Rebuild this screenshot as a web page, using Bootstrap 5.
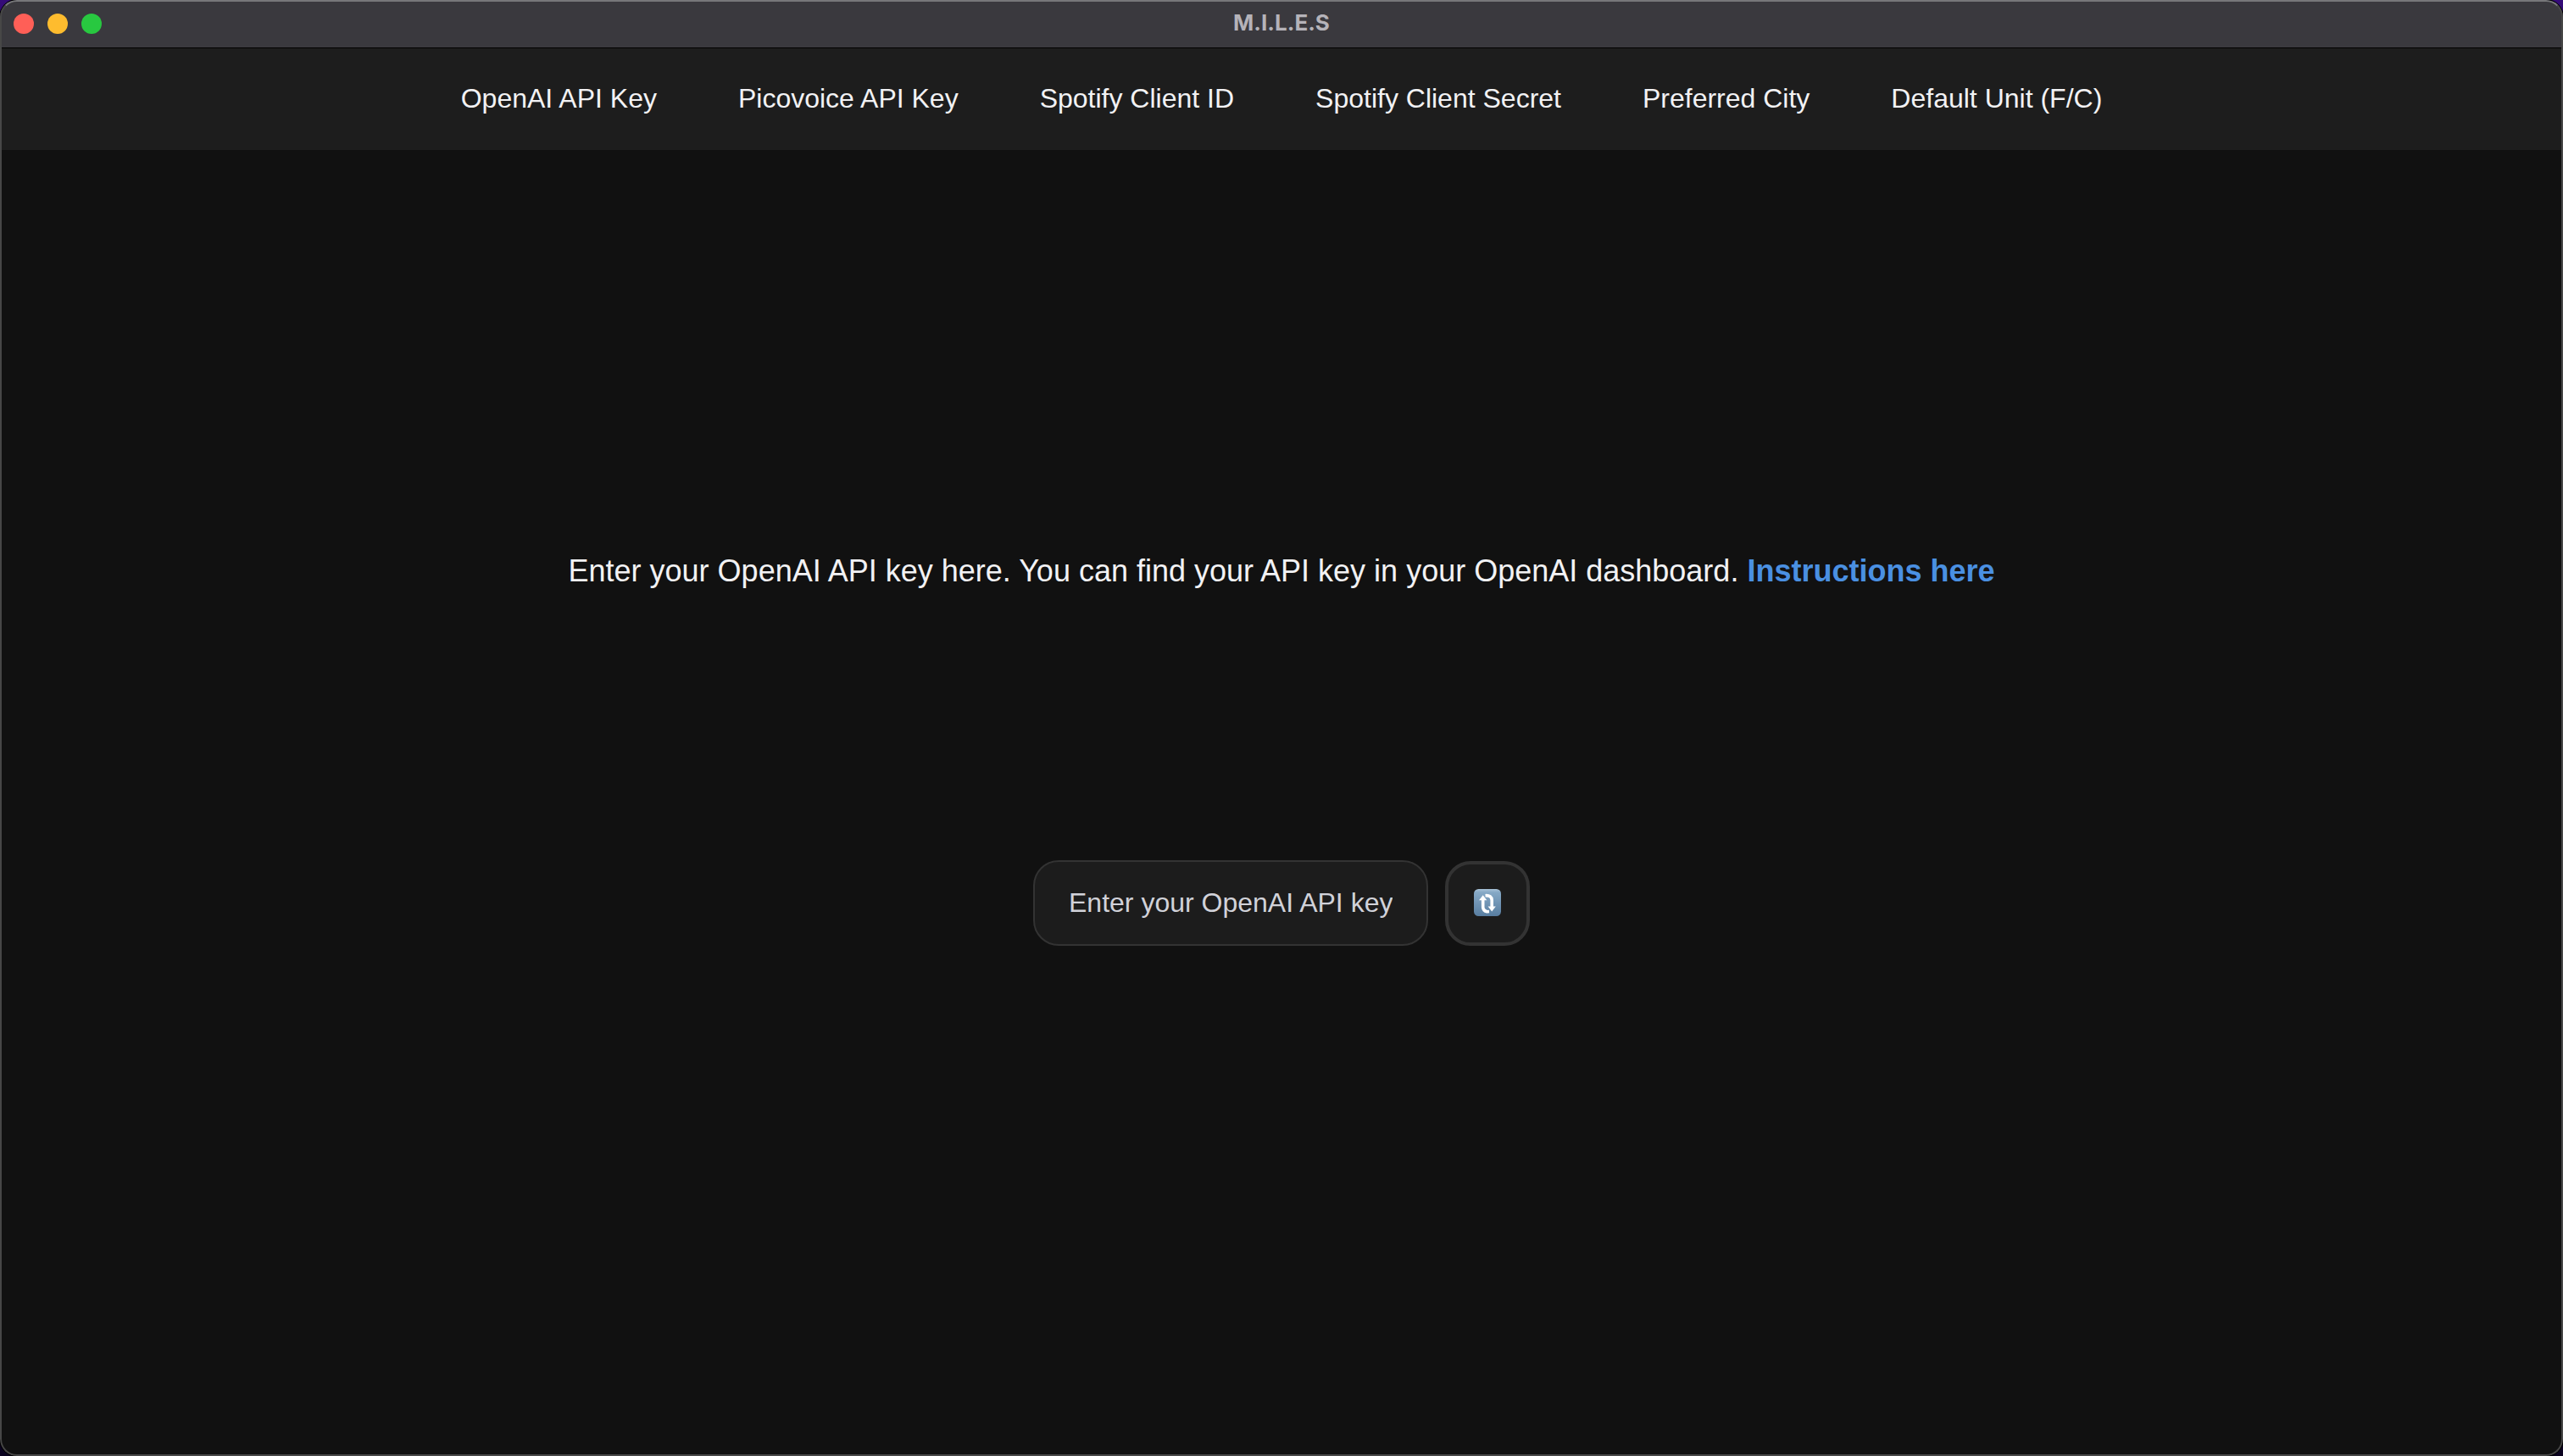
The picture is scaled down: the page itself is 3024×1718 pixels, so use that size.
<!DOCTYPE html>
<html lang="en" data-bs-theme="dark">
<head>
<meta charset="utf-8">
<meta name="viewport" content="width=device-width, initial-scale=1">
<title>M.I.L.E.S</title>
<link href="https://cdn.jsdelivr.net/npm/bootstrap@5.3.0/dist/css/bootstrap.min.css" rel="stylesheet">
<style>
  html, body { height: 100%; }
  body { background: #0b0320; font-family: "Liberation Sans", Arial, sans-serif; }
  .desktop { height: 100vh; background: linear-gradient(#350b78, #0b0320 30%, #0b0320); }
  .app-window { background: #111; border-radius: 20px; box-shadow: 0 0 0 1px #000; }
  /* light rim drawn over the window edge */
  .app-window::after {
    content: ""; position: absolute; inset: 0; pointer-events: none;
    border: 2px solid #474747; border-top-color: #77777a; border-radius: 20px;
  }
  .titlebar { height: 57px; background: #3a393e; border-bottom: 1px solid #000; padding: 0 16px; }
  .light { width: 24px; height: 24px; }
  .light-close { background: #ff5f57; }
  .light-min { background: #febc2e; }
  .light-max { background: #28c840; }
  .window-title { font-family: Inter, sans-serif; font-weight: 700; font-size: 26px; line-height: 52px; padding-bottom: 3px; color: #b5b3b9; }
  .side { flex: 1 1 0; }
  .topnav { height: 120px; background: #1d1d1d; gap: 96px; padding-bottom: 2px; }
  .topnav .nav-link { color: #f2f2f4; font-size: 32px; line-height: 40px; padding: 0; white-space: nowrap; }
  .hint { font-size: 36px; line-height: 42px; color: #f2f2f4; margin: 0; white-space: nowrap; padding-top: 476px; }
  .hint a { color: #4a90e2; font-weight: 700; text-decoration: none; }
  .key-form { gap: 20px; margin-top: 320px; }
  .key-input {
    width: 466px; height: 101px; padding: 0 40px; font-size: 32px; text-align: center;
    background: #1c1c1c; border: 2px solid #333; border-radius: 30px; color: #f2f2f4;
  }
  .key-input::placeholder { color: #d1d2d9; opacity: 1; }
  .swap-btn { width: 100px; height: 100px; padding: 0 0 2px; background: #1c1c1c; border: 4px solid #333; border-radius: 30px; margin-top: 1px; }
</style>
<script src="https://cdn.jsdelivr.net/npm/bootstrap@5.3.0/dist/js/bootstrap.bundle.min.js"></script>
</head>
<body class="overflow-hidden">
<div class="desktop">
  <div class="app-window position-relative d-flex flex-column h-100 overflow-hidden">
    <header class="titlebar d-flex align-items-center flex-shrink-0">
      <div class="side d-flex gap-3">
        <span class="light light-close rounded-circle"></span>
        <span class="light light-min rounded-circle"></span>
        <span class="light light-max rounded-circle"></span>
      </div>
      <div class="window-title">M.I.L.E.S</div>
      <div class="side"></div>
    </header>
    <nav class="topnav nav d-flex justify-content-center align-items-center flex-nowrap flex-shrink-0">
      <a class="nav-link" href="#">OpenAI API Key</a>
      <a class="nav-link" href="#">Picovoice API Key</a>
      <a class="nav-link" href="#">Spotify Client ID</a>
      <a class="nav-link" href="#">Spotify Client Secret</a>
      <a class="nav-link" href="#">Preferred City</a>
      <a class="nav-link" href="#">Default Unit (F/C)</a>
    </nav>
    <main class="flex-grow-1 d-flex flex-column align-items-center">
      <p class="hint">Enter your OpenAI API key here. You can find your API key in your OpenAI dashboard. <a href="#">Instructions here</a></p>
      <form class="key-form d-flex align-items-start">
        <input class="key-input form-control" type="text" placeholder="Enter your OpenAI API key">
        <button class="swap-btn btn d-flex align-items-center justify-content-center" type="button" aria-label="Update">
          <svg width="32" height="32" viewBox="0 0 32 32">
            <defs>
              <linearGradient id="tile" x1="0" y1="0" x2="0" y2="1">
                <stop offset="0" stop-color="#a9c3d8"/><stop offset=".12" stop-color="#86a9c6"/><stop offset="1" stop-color="#587da0"/>
              </linearGradient>
            </defs>
            <rect width="32" height="32" rx="5.5" fill="url(#tile)"/>
            <path d="M10.700 13v8.500q.3 4.300 4.800 5.200l2.500-.2" fill="none" stroke="#fff" stroke-width="3.600"/>
            <path d="M6 13.200 10.700 7.300l4.600 5.900z" fill="#fff"/>
            <path d="M13.500 7.700q7.500-.5 7.700 5.500v8" fill="none" stroke="#fff" stroke-width="3.600"/>
            <path d="M16.600 20.500h9.200l-4.600 5.900z" fill="#fff"/>
          </svg>
        </button>
      </form>
    </main>
  </div>
</div>
</body>
</html>
